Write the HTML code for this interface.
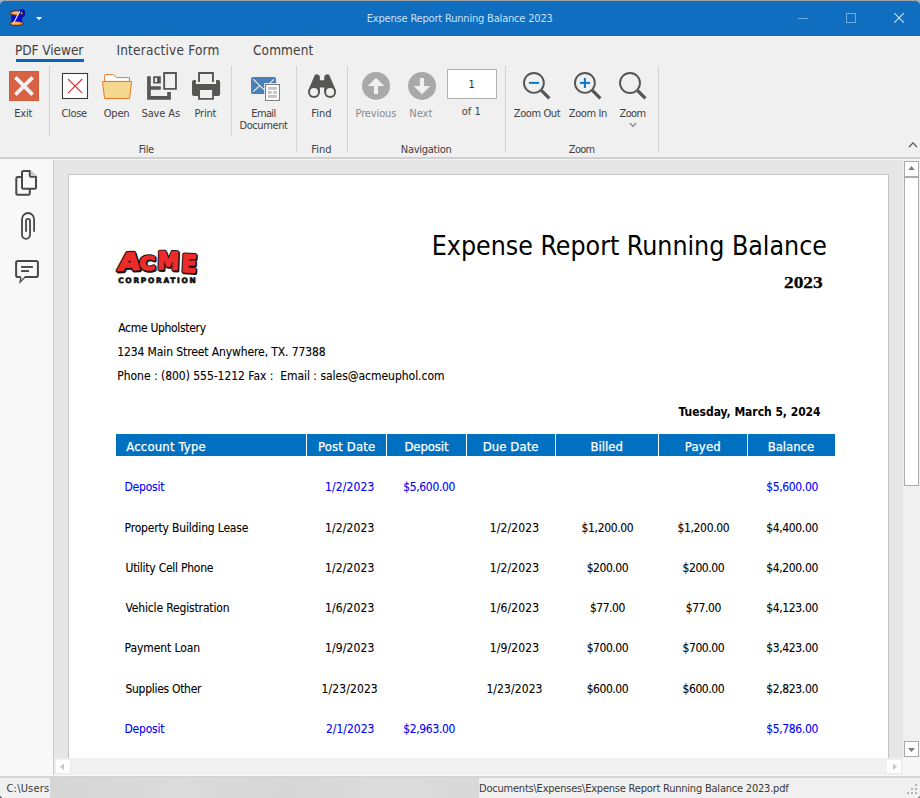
<!DOCTYPE html>
<html lang="en">
<head>
<meta charset="utf-8">
<title>Expense Report Running Balance 2023</title>
<style>
html,body{margin:0;padding:0;}
body{width:920px;height:798px;overflow:hidden;position:relative;background:#f0f0f0;font-family:"DejaVu Sans Condensed","DejaVu Sans","Liberation Sans",sans-serif;font-stretch:condensed;}
.a{position:absolute;}
.t{position:absolute;white-space:pre;line-height:20px;height:20px;}
#corner{left:0;top:0;width:920px;height:12px;background:#9dbbd4;}
#titlebar{left:0;top:0;width:920px;height:36px;background:#0f6ec0;border-radius:5px 5px 0 0;border-top:1px solid #9fa5a8;box-sizing:border-box;}
#tabul{left:16px;top:59px;width:68px;height:3px;background:#0767c0;}
.vs{position:absolute;width:1px;background:#d2d2d2;}
#ribline{left:0;top:157px;width:920px;height:2px;background:#d0d0d0;border-bottom:1px solid #f4f4f4;}
#side{left:0;top:160px;width:53px;height:616px;background:#f8f8f8;}
#sideb{left:53px;top:160px;width:1px;height:616px;background:#c9c9c9;}
#doc{left:54px;top:160px;width:849px;height:598px;background:#e6e6e6;}
#sheet{left:68px;top:174px;width:821px;height:584px;background:#fff;border:1px solid #c4c4c4;border-bottom:none;box-sizing:border-box;}
#vscroll{left:903px;top:160px;width:17px;height:598px;background:#f0f0f0;}
.sbtn{position:absolute;background:#fff;border:1px solid #ababab;box-sizing:border-box;}
#hscroll{left:54px;top:758px;width:866px;height:18px;background:#f0f0f0;}
#statline{left:0;top:776px;width:920px;height:2px;background:#d4d4d4;}
#status{left:0;top:778px;width:920px;height:20px;background:#f0f0f0;}
#redact{left:50px;top:778px;width:429px;height:20px;background:linear-gradient(90deg,#d6d6d6,#dbdbdb 30%,#d7d7d7 55%,#dcdcdc 80%,#d8d8d8);}
#thead{left:116px;top:434px;width:719px;height:22px;background:#0070c0;}
.cs{position:absolute;top:434px;width:1px;height:22px;background:#fff;}
#pagebox{left:447px;top:69px;width:50px;height:30px;background:#fff;border:1px solid #b0b0b0;box-sizing:border-box;}
svg{position:absolute;overflow:visible;}
</style>
</head>
<body>
<div class="a" id="corner"></div>
<div class="a" id="titlebar"></div>
<div class="a" id="tabul"></div>
<div class="vs" style="left:49px;top:66px;height:70px"></div>
<div class="vs" style="left:231px;top:66px;height:70px"></div>
<div class="vs" style="left:296px;top:66px;height:87px"></div>
<div class="vs" style="left:347px;top:66px;height:87px"></div>
<div class="vs" style="left:505px;top:66px;height:87px"></div>
<div class="vs" style="left:658px;top:66px;height:87px"></div>
<div class="a" id="pagebox"></div>
<div class="a" id="ribline"></div>
<div class="a" id="side"></div>
<div class="a" id="sideb"></div>
<div class="a" id="doc"></div>
<div class="a" id="sheet"></div>
<div class="a" id="vscroll"></div>
<div class="sbtn" style="left:904px;top:161px;width:15px;height:16px"></div>
<div class="sbtn" style="left:904px;top:177px;width:15px;height:309px"></div>
<div class="sbtn" style="left:904px;top:741px;width:15px;height:16px"></div>
<div class="a" id="hscroll"></div>
<div class="a" style="left:55px;top:759px;width:16px;height:15px;background:#fff;border:1px solid #ececec;box-sizing:border-box"></div>
<div class="a" style="left:886px;top:759px;width:16px;height:15px;background:#fff;border:1px solid #ececec;box-sizing:border-box"></div>
<div class="a" style="left:903px;top:758px;width:17px;height:17px;background:#f6f6f6"></div>
<div class="a" style="left:0;top:775px;width:920px;height:1px;background:#f8f8f8"></div>
<div class="a" id="statline"></div>
<div class="a" id="status"></div>
<div class="a" id="redact"></div>
<div class="a" style="left:918px;top:796px;width:2px;height:2px;background:linear-gradient(135deg,#f0f0f0 50%,#8a8f94 50%)"></div>
<div class="a" style="left:0;top:796px;width:2px;height:2px;background:linear-gradient(225deg,#f0f0f0 50%,#6a7076 50%)"></div>
<div class="a" id="thead"></div>
<div class="cs" style="left:306px"></div>
<div class="cs" style="left:386px"></div>
<div class="cs" style="left:466px"></div>
<div class="cs" style="left:555px"></div>
<div class="cs" style="left:658px"></div>
<div class="cs" style="left:747px"></div>
<svg width="920" height="798" viewBox="0 0 920 798" style="left:0;top:0">
<!-- app icon: thread spool -->
<g>
<rect x="11.9" y="14" width="9.8" height="9" fill="#0a0ae0" stroke="#00006a" stroke-width="0.8"/>
<ellipse cx="16.5" cy="13.1" rx="6.6" ry="2.3" fill="#f08a3c" stroke="#3a1a08" stroke-width="0.8"/>
<ellipse cx="16.3" cy="12.6" rx="3.5" ry="0.9" fill="#ffc48c"/>
<ellipse cx="16.5" cy="23.4" rx="6.7" ry="2.1" fill="#f08a3c" stroke="#3a1a08" stroke-width="0.8"/>
<ellipse cx="16.3" cy="23.0" rx="4" ry="0.8" fill="#ffc48c"/>
<ellipse cx="21.8" cy="13.2" rx="2.3" ry="3" fill="none" stroke="#00006a" stroke-width="2"/><ellipse cx="21.8" cy="13.2" rx="2.3" ry="3" fill="none" stroke="#1010e0" stroke-width="1.1"/>
<path d="M19.8 10.9 L12.9 24.6" stroke="#e4e4f2" stroke-width="1.2" fill="none"/>
</g>
<path d="M36 17 H42.2 L39.1 20.2 Z" fill="#ffffff"/>
<!-- window controls -->
<path d="M798 18.5 H808" stroke="#74abdd" stroke-width="1" fill="none"/>
<rect x="846.5" y="13.5" width="9" height="9" fill="none" stroke="#74abdd" stroke-width="1"/>
<path d="M894.3 13.1 L903.9 22.7 M903.9 13.1 L894.3 22.7" stroke="#cfe2f4" stroke-width="1.1" fill="none"/>

<!-- Exit -->
<rect x="9" y="71" width="30" height="30" fill="#d86344"/>
<rect x="9.5" y="71.5" width="29" height="29" fill="none" stroke="#d65a38" stroke-width="1"/>
<path d="M15.4 77.4 L32.6 94.6 M32.6 77.4 L15.4 94.6" stroke="#f0f0f0" stroke-width="3.8" fill="none"/>
<!-- Close -->
<rect x="62.5" y="73.5" width="25" height="25" fill="#ffffff" stroke="#3c3c3c" stroke-width="1.1"/>
<path d="M68 79 L82.2 93.2 M82.2 79 L68 93.2" stroke="#e8262c" stroke-width="1.1" fill="none"/>
<!-- Open -->
<path d="M104.6 81.4 V75.6 Q104.6 74.6 105.6 74.6 H112.6 Q113.2 74.6 113.7 75.1 L116.6 77.6 H129.4 V81.4 Z" fill="#ffffff" stroke="#e87a26" stroke-width="1"/>
<path d="M102.4 81.5 H131.6 L129.5 98.5 H104.6 Z" fill="#f5d88f" stroke="#e87a26" stroke-width="1" stroke-linejoin="miter"/>
<!-- Save As -->
<g fill="#565655">
<path d="M147.1 76.3 H150.8 V86.2 H160.8 V89.8 H150.8 V96.1 H167.2 V92.1 H170.9 V99.8 H147.1 Z"/>
<path d="M153.2 76.3 H160.8 V83.6 H153.2 Z M155 78 V82 H157.1 V78 Z" fill-rule="evenodd"/>
<path d="M163.2 72.1 H176.9 V89.8 H163.2 Z M165.1 74 V87.9 H175 V74 Z" fill-rule="evenodd"/>
</g>
<!-- Print -->
<g fill="#565655">
<path d="M198.1 81.9 V72.1 H213.9 V81.9 H212 V74 H200 V81.9 Z"/>
<path d="M194 80.1 H195.9 V84 H216.1 V80.1 H218.1 Q220.1 80.1 220.1 82.1 V93.9 Q220.1 95.9 218.1 95.9 H213.9 V99.8 H198.1 V95.9 H194 Q192 95.9 192 93.9 V82.1 Q192 80.1 194 80.1 Z M200 90.1 V97.9 H212.1 V90.1 Z" fill-rule="evenodd"/>
</g>
<!-- Email Document -->
<rect x="251" y="76.9" width="25.1" height="17.2" rx="2.2" fill="#4a80ba"/>
<path d="M253.3 79.3 L263.6 89.3 L273.9 79.3 M253.3 91.7 L259.6 85.6" stroke="#f4f4f4" stroke-width="1.1" fill="none"/>
<rect x="264.2" y="83.2" width="16.6" height="18.5" fill="#fbfbfb"/>
<rect x="265.5" y="84.5" width="14" height="16" fill="#ffffff" stroke="#7e7e7e" stroke-width="1.1"/>
<g fill="#c2c2c2">
<rect x="268" y="87" width="8.9" height="2.8"/>
<rect x="268" y="91" width="3.8" height="2.8"/>
<rect x="273.1" y="91" width="3.8" height="2.8"/>
<rect x="268" y="95" width="8.9" height="2.8"/>
</g>
<!-- Find binoculars -->
<g fill="#565655">
<path d="M308.4 90 L314.5 75.8 A2.9 2.9 0 0 1 319.9 76.9 V80.3 H324.2 V76.9 A2.9 2.9 0 0 1 329.6 75.8 L335.7 90 L330 96 L324.2 92.1 V87.6 H319.9 V92.1 L314 96 Z"/>
<circle cx="314" cy="92.1" r="6"/>
<circle cx="330.1" cy="92.1" r="6"/>
</g>
<circle cx="314" cy="92.1" r="4" fill="#f0f0f0"/>
<circle cx="330.1" cy="92.1" r="4" fill="#f0f0f0"/>
<!-- Previous / Next -->
<circle cx="376.05" cy="85.95" r="14" fill="#a9a9a9"/>
<path d="M376 77.7 L384.3 86.1 H378.05 V94.1 H373.9 V86.1 H367.7 Z" fill="#f0f0f0"/>
<circle cx="422.05" cy="85.95" r="14" fill="#a9a9a9"/>
<path d="M422 94.3 L430.3 85.9 H424.05 V77.9 H419.9 V85.9 H413.7 Z" fill="#f0f0f0"/>
<!-- Zoom icons -->
<g fill="none" stroke="#555555">
<circle cx="533.9" cy="82.9" r="9.95" stroke-width="1.9"/>
<path d="M541.4 90.4 L549.3 98.3" stroke-width="3.2"/>
<circle cx="584.9" cy="82.9" r="9.95" stroke-width="1.9"/>
<path d="M592.4 90.4 L600.3 98.3" stroke-width="3.2"/>
<circle cx="630" cy="83" r="10" stroke-width="1.9"/>
<path d="M637.5 90.5 L645.4 98.4" stroke-width="3.2"/>
</g>
<rect x="528.9" y="81.9" width="10.15" height="2" fill="#0b79c8"/>
<rect x="579.9" y="81.9" width="10.15" height="2" fill="#0b79c8"/>
<rect x="583.9" y="77.9" width="2" height="10.05" fill="#0b79c8"/>
<path d="M629.9 123.2 L633 126.3 L636.1 123.2" fill="none" stroke="#7a7a7a" stroke-width="1.2"/>
<!-- ribbon collapse chevron -->
<path d="M909 147 L913 142.9 L917 147" fill="none" stroke="#5a5a5a" stroke-width="1.3"/>

<!-- sidebar icons -->
<g fill="none" stroke="#484848" stroke-width="2" stroke-linejoin="round">
<path d="M29.8 171 H23.5 Q22 171 22 172.5 V187.3 Q22 188.8 23.5 188.8 H34.5 Q36 188.8 36 187.3 V176.8 H31.3 Q29.8 176.8 29.8 175.3 Z"/>
<path d="M22 177 H17.8 Q16.3 177 16.3 178.5 V193.2 Q16.3 194.7 17.8 194.7 H28.3 Q29.8 194.7 29.8 193.2 V188.8"/>
</g>
<path d="M30.8 170 L37 176 H30.8 Z" fill="#c8c8c8"/>
<path d="M34.1 231.8 V219.05 A6.05 6.05 0 0 0 22 219.05 V234.8 A4.02 4.02 0 0 0 30.05 234.8 V220.8 A2 2 0 0 0 26.05 220.8 V231.8" fill="none" stroke="#484848" stroke-width="1.8"/>
<g>
<path d="M24.6 277 H36.1 Q37.9 277 37.9 275.2 V262.7 Q37.9 260.9 36.1 260.9 H17.9 Q16.1 260.9 16.1 262.7 V275.2 Q16.1 277 17.9 277 H20.4" fill="none" stroke="#484848" stroke-width="2" stroke-linejoin="miter"/>
<path d="M20.3 276.2 L21.6 277.6 L21.2 280.4 L23.6 277.8 L25.6 276.2 L25.6 277.6 L19.2 284 Z" fill="#484848"/>
<rect x="21.1" y="266" width="11.8" height="1.9" fill="#484848"/>
<rect x="21.1" y="270.1" width="7.9" height="1.9" fill="#484848"/>
</g>

<!-- scrollbar arrows -->
<path d="M908.3 170 L911.5 166 L914.8 170 Z" fill="#7d7d7d"/>
<path d="M908 748 H915 L911.5 752 Z" fill="#7d7d7d"/>
<path d="M64 763.4 V770 L59.9 766.7 Z" fill="#c6c6c6"/>
<path d="M893 763.4 V770 L897.1 766.7 Z" fill="#c6c6c6"/>
<!-- resize grip -->
<g fill="#b4b4b4">
<rect x="915" y="784" width="2" height="2"/>
<rect x="911" y="788" width="2" height="2"/><rect x="915" y="788" width="2" height="2"/>
<rect x="907" y="792" width="2" height="2"/><rect x="911" y="792" width="2" height="2"/><rect x="915" y="792" width="2" height="2"/>
</g>
<!-- ACME logo -->
<g font-family='"DejaVu Sans","Liberation Sans",sans-serif' font-weight="700" font-stretch="normal" style="font-stretch:normal" stroke-linejoin="round">
 <g fill="#111111" stroke="#111111" stroke-width="3.4" transform="translate(1.1,1.2)">
  <text transform="translate(117.4,270.5) rotate(-3) skewX(-10)" font-size="23.5" textLength="21.5" lengthAdjust="spacingAndGlyphs">A</text>
  <text transform="translate(139.5,270.2)" font-size="19.8" textLength="15.6" lengthAdjust="spacingAndGlyphs">C</text>
  <text transform="translate(157.0,268.9) rotate(2)" font-size="24.2" textLength="21.8" lengthAdjust="spacingAndGlyphs">M</text>
  <text transform="translate(180.9,271.4) rotate(3)" font-size="23.8" textLength="15.2" lengthAdjust="spacingAndGlyphs">E</text>
 </g>
 <g fill="#111111" stroke="#111111" stroke-width="3.6">
  <text transform="translate(117.4,270.5) rotate(-3) skewX(-10)" font-size="23.5" textLength="21.5" lengthAdjust="spacingAndGlyphs">A</text>
  <text transform="translate(139.5,270.2)" font-size="19.8" textLength="15.6" lengthAdjust="spacingAndGlyphs">C</text>
  <text transform="translate(157.0,268.9) rotate(2)" font-size="24.2" textLength="21.8" lengthAdjust="spacingAndGlyphs">M</text>
  <text transform="translate(180.9,271.4) rotate(3)" font-size="23.8" textLength="15.2" lengthAdjust="spacingAndGlyphs">E</text>
 </g>
 <g fill="#ee2b2b" stroke="#ee2b2b" stroke-width="1.7">
  <text transform="translate(117.4,270.5) rotate(-3) skewX(-10)" font-size="23.5" textLength="21.5" lengthAdjust="spacingAndGlyphs">A</text>
  <text transform="translate(139.5,270.2)" font-size="19.8" textLength="15.6" lengthAdjust="spacingAndGlyphs">C</text>
  <text transform="translate(157.0,268.9) rotate(2)" font-size="24.2" textLength="21.8" lengthAdjust="spacingAndGlyphs">M</text>
  <text transform="translate(180.9,271.4) rotate(3)" font-size="23.8" textLength="15.2" lengthAdjust="spacingAndGlyphs">E</text>
 </g>
 <text x="118.2" y="282.7" font-size="7.4" fill="#111111" stroke="#111111" stroke-width="0.7" textLength="77.6" lengthAdjust="spacing">CORPORATION</text>
</g>

</svg>

<div class="t" style='left:366.75px;top:8.89px;font-size:11px;letter-spacing:-0.189px;color:#cbe0f4;'>Expense Report Running Balance 2023</div>
<div class="t" style='left:15.00px;top:40.03px;font-size:13.5px;letter-spacing:-0.054px;color:#404040;'>PDF Viewer</div>
<div class="t" style='left:116.40px;top:40.03px;font-size:13.5px;letter-spacing:0.216px;color:#404040;'>Interactive Form</div>
<div class="t" style='left:253.00px;top:40.03px;font-size:13.5px;letter-spacing:0.125px;color:#404040;'>Comment</div>
<div class="t" style='left:14.25px;top:103.64px;font-size:11px;letter-spacing:-0.202px;color:#404040;'>Exit</div>
<div class="t" style='left:61.50px;top:103.64px;font-size:11px;letter-spacing:-0.343px;color:#404040;'>Close</div>
<div class="t" style='left:103.75px;top:103.64px;font-size:11px;letter-spacing:-0.221px;color:#404040;'>Open</div>
<div class="t" style='left:141.50px;top:103.64px;font-size:11px;letter-spacing:-0.117px;color:#404040;'>Save As</div>
<div class="t" style='left:194.50px;top:103.64px;font-size:11px;letter-spacing:-0.216px;color:#404040;'>Print</div>
<div class="t" style='left:251.25px;top:103.64px;font-size:11px;letter-spacing:-0.614px;color:#404040;'>Email</div>
<div class="t" style='left:239.50px;top:116.39px;font-size:11px;letter-spacing:-0.414px;color:#404040;'>Document</div>
<div class="t" style='left:311.25px;top:103.64px;font-size:11px;letter-spacing:0.028px;color:#404040;'>Find</div>
<div class="t" style='left:355.50px;top:103.64px;font-size:11px;letter-spacing:-0.124px;color:#8a8a8a;'>Previous</div>
<div class="t" style='left:409.25px;top:103.64px;font-size:11px;letter-spacing:0.032px;color:#8a8a8a;'>Next</div>
<div class="t" style='left:468.50px;top:74.89px;font-size:11px;letter-spacing:0.000px;color:#303030;'>1</div>
<div class="t" style='left:461.75px;top:101.64px;font-size:11px;letter-spacing:0.025px;color:#404040;'>of 1</div>
<div class="t" style='left:513.75px;top:103.64px;font-size:11px;letter-spacing:-0.390px;color:#404040;'>Zoom Out</div>
<div class="t" style='left:568.75px;top:103.64px;font-size:11px;letter-spacing:-0.389px;color:#404040;'>Zoom In</div>
<div class="t" style='left:619.50px;top:103.64px;font-size:11px;letter-spacing:-0.628px;color:#404040;'>Zoom</div>
<div class="t" style='left:138.75px;top:139.64px;font-size:11px;letter-spacing:-0.381px;color:#404040;'>File</div>
<div class="t" style='left:311.25px;top:139.64px;font-size:11px;letter-spacing:0.028px;color:#404040;'>Find</div>
<div class="t" style='left:400.75px;top:139.64px;font-size:11px;letter-spacing:-0.261px;color:#404040;'>Navigation</div>
<div class="t" style='left:568.80px;top:139.64px;font-size:11px;letter-spacing:-0.695px;color:#404040;'>Zoom</div>
<div class="t" style='left:6.50px;top:779.39px;font-size:11px;letter-spacing:0.194px;color:#383838;'>C:\Users</div>
<div class="t" style='left:479.00px;top:779.39px;font-size:11px;letter-spacing:-0.215px;color:#383838;'>Documents\Expenses\Expense Report Running Balance 2023.pdf</div>
<div class="t" style='left:431.75px;top:235.78px;font-size:26.5px;letter-spacing:-0.011px;color:#000000;'>Expense Report Running Balance</div>
<div class="t" style='left:783.90px;top:272.23px;font-size:17.7px;letter-spacing:0.000px;color:#000000;transform:scaleX(1.0948);transform-origin:0 0;-webkit-text-stroke:0.25px #000000;font-weight:700;font-family:"Liberation Serif", serif;'>2023</div>
<div class="t" style='left:118.25px;top:318.05px;font-size:12px;letter-spacing:-0.310px;color:#000000;-webkit-text-stroke:0.1px #000000;'>Acme Upholstery</div>
<div class="t" style='left:117.25px;top:342.30px;font-size:12px;letter-spacing:-0.106px;color:#000000;-webkit-text-stroke:0.1px #000000;'>1234 Main Street Anywhere, TX. 77388</div>
<div class="t" style='left:117.25px;top:366.30px;font-size:12px;letter-spacing:-0.030px;color:#000000;-webkit-text-stroke:0.1px #000000;'>Phone : (800) 555-1212 Fax : &nbsp;Email : sales@acmeuphol.com</div>
<div class="t" style='left:678.60px;top:401.75px;font-size:12px;letter-spacing:-0.033px;color:#000000;font-weight:700;'>Tuesday, March 5, 2024</div>
<div class="t" style='left:126.25px;top:437.00px;font-size:13px;letter-spacing:0.171px;color:#ffffff;-webkit-text-stroke:0.25px #ffffff;'>Account Type</div>
<div class="t" style='left:318.00px;top:437.00px;font-size:13px;letter-spacing:0.139px;color:#ffffff;-webkit-text-stroke:0.25px #ffffff;'>Post Date</div>
<div class="t" style='left:404.40px;top:437.00px;font-size:13px;letter-spacing:-0.088px;color:#ffffff;-webkit-text-stroke:0.25px #ffffff;'>Deposit</div>
<div class="t" style='left:482.70px;top:437.00px;font-size:13px;letter-spacing:0.073px;color:#ffffff;-webkit-text-stroke:0.25px #ffffff;'>Due Date</div>
<div class="t" style='left:590.50px;top:437.00px;font-size:13px;letter-spacing:0.006px;color:#ffffff;-webkit-text-stroke:0.25px #ffffff;'>Billed</div>
<div class="t" style='left:684.80px;top:437.00px;font-size:13px;letter-spacing:0.187px;color:#ffffff;-webkit-text-stroke:0.25px #ffffff;'>Payed</div>
<div class="t" style='left:767.80px;top:437.00px;font-size:13px;letter-spacing:-0.058px;color:#ffffff;-webkit-text-stroke:0.25px #ffffff;'>Balance</div>
<div class="t" style='left:124.50px;top:477.30px;font-size:12px;letter-spacing:-0.215px;color:#0000ff;-webkit-text-stroke:0.1px #0000ff;'>Deposit</div>
<div class="t" style='left:324.90px;top:477.30px;font-size:12px;letter-spacing:0.155px;color:#0000ff;-webkit-text-stroke:0.1px #0000ff;'>1/2/2023</div>
<div class="t" style='left:403.19px;top:477.30px;font-size:12px;letter-spacing:-0.341px;color:#0000ff;-webkit-text-stroke:0.1px #0000ff;'>$5,600.00</div>
<div class="t" style='left:766.13px;top:477.30px;font-size:12px;letter-spacing:-0.341px;color:#0000ff;-webkit-text-stroke:0.1px #0000ff;'>$5,600.00</div>
<div class="t" style='left:124.50px;top:518.30px;font-size:12px;letter-spacing:-0.169px;color:#000000;-webkit-text-stroke:0.1px #000000;'>Property Building Lease</div>
<div class="t" style='left:324.90px;top:518.30px;font-size:12px;letter-spacing:0.155px;color:#000000;-webkit-text-stroke:0.1px #000000;'>1/2/2023</div>
<div class="t" style='left:489.65px;top:518.30px;font-size:12px;letter-spacing:0.155px;color:#000000;-webkit-text-stroke:0.1px #000000;'>1/2/2023</div>
<div class="t" style='left:581.54px;top:518.30px;font-size:12px;letter-spacing:-0.341px;color:#000000;-webkit-text-stroke:0.1px #000000;'>$1,200.00</div>
<div class="t" style='left:677.44px;top:518.30px;font-size:12px;letter-spacing:-0.341px;color:#000000;-webkit-text-stroke:0.1px #000000;'>$1,200.00</div>
<div class="t" style='left:766.13px;top:518.30px;font-size:12px;letter-spacing:-0.341px;color:#000000;-webkit-text-stroke:0.1px #000000;'>$4,400.00</div>
<div class="t" style='left:125.50px;top:558.30px;font-size:12px;letter-spacing:-0.256px;color:#000000;-webkit-text-stroke:0.1px #000000;'>Utility Cell Phone</div>
<div class="t" style='left:324.90px;top:558.30px;font-size:12px;letter-spacing:0.155px;color:#000000;-webkit-text-stroke:0.1px #000000;'>1/2/2023</div>
<div class="t" style='left:489.65px;top:558.30px;font-size:12px;letter-spacing:0.155px;color:#000000;-webkit-text-stroke:0.1px #000000;'>1/2/2023</div>
<div class="t" style='left:586.63px;top:558.30px;font-size:12px;letter-spacing:-0.437px;color:#000000;-webkit-text-stroke:0.1px #000000;'>$200.00</div>
<div class="t" style='left:682.53px;top:558.30px;font-size:12px;letter-spacing:-0.437px;color:#000000;-webkit-text-stroke:0.1px #000000;'>$200.00</div>
<div class="t" style='left:766.13px;top:558.30px;font-size:12px;letter-spacing:-0.341px;color:#000000;-webkit-text-stroke:0.1px #000000;'>$4,200.00</div>
<div class="t" style='left:125.50px;top:598.30px;font-size:12px;letter-spacing:-0.153px;color:#000000;-webkit-text-stroke:0.1px #000000;'>Vehicle Registration</div>
<div class="t" style='left:324.90px;top:598.30px;font-size:12px;letter-spacing:0.155px;color:#000000;-webkit-text-stroke:0.1px #000000;'>1/6/2023</div>
<div class="t" style='left:489.65px;top:598.30px;font-size:12px;letter-spacing:0.155px;color:#000000;-webkit-text-stroke:0.1px #000000;'>1/6/2023</div>
<div class="t" style='left:589.91px;top:598.30px;font-size:12px;letter-spacing:-0.461px;color:#000000;-webkit-text-stroke:0.1px #000000;'>$77.00</div>
<div class="t" style='left:685.81px;top:598.30px;font-size:12px;letter-spacing:-0.461px;color:#000000;-webkit-text-stroke:0.1px #000000;'>$77.00</div>
<div class="t" style='left:766.13px;top:598.30px;font-size:12px;letter-spacing:-0.341px;color:#000000;-webkit-text-stroke:0.1px #000000;'>$4,123.00</div>
<div class="t" style='left:124.50px;top:637.85px;font-size:12px;letter-spacing:-0.082px;color:#000000;-webkit-text-stroke:0.1px #000000;'>Payment Loan</div>
<div class="t" style='left:324.90px;top:637.85px;font-size:12px;letter-spacing:0.155px;color:#000000;-webkit-text-stroke:0.1px #000000;'>1/9/2023</div>
<div class="t" style='left:489.65px;top:637.85px;font-size:12px;letter-spacing:0.155px;color:#000000;-webkit-text-stroke:0.1px #000000;'>1/9/2023</div>
<div class="t" style='left:586.63px;top:637.85px;font-size:12px;letter-spacing:-0.437px;color:#000000;-webkit-text-stroke:0.1px #000000;'>$700.00</div>
<div class="t" style='left:682.53px;top:637.85px;font-size:12px;letter-spacing:-0.437px;color:#000000;-webkit-text-stroke:0.1px #000000;'>$700.00</div>
<div class="t" style='left:766.13px;top:637.85px;font-size:12px;letter-spacing:-0.341px;color:#000000;-webkit-text-stroke:0.1px #000000;'>$3,423.00</div>
<div class="t" style='left:125.50px;top:679.30px;font-size:12px;letter-spacing:-0.294px;color:#000000;-webkit-text-stroke:0.1px #000000;'>Supplies Other</div>
<div class="t" style='left:321.62px;top:679.30px;font-size:12px;letter-spacing:0.096px;color:#000000;-webkit-text-stroke:0.1px #000000;'>1/23/2023</div>
<div class="t" style='left:486.38px;top:679.30px;font-size:12px;letter-spacing:0.096px;color:#000000;-webkit-text-stroke:0.1px #000000;'>1/23/2023</div>
<div class="t" style='left:586.63px;top:679.30px;font-size:12px;letter-spacing:-0.437px;color:#000000;-webkit-text-stroke:0.1px #000000;'>$600.00</div>
<div class="t" style='left:682.53px;top:679.30px;font-size:12px;letter-spacing:-0.437px;color:#000000;-webkit-text-stroke:0.1px #000000;'>$600.00</div>
<div class="t" style='left:766.13px;top:679.30px;font-size:12px;letter-spacing:-0.341px;color:#000000;-webkit-text-stroke:0.1px #000000;'>$2,823.00</div>
<div class="t" style='left:124.50px;top:719.30px;font-size:12px;letter-spacing:-0.215px;color:#0000ff;-webkit-text-stroke:0.1px #0000ff;'>Deposit</div>
<div class="t" style='left:325.90px;top:719.30px;font-size:12px;letter-spacing:0.012px;color:#0000ff;-webkit-text-stroke:0.1px #0000ff;'>2/1/2023</div>
<div class="t" style='left:403.19px;top:719.30px;font-size:12px;letter-spacing:-0.341px;color:#0000ff;-webkit-text-stroke:0.1px #0000ff;'>$2,963.00</div>
<div class="t" style='left:766.13px;top:719.30px;font-size:12px;letter-spacing:-0.341px;color:#0000ff;-webkit-text-stroke:0.1px #0000ff;'>$5,786.00</div>
</body>
</html>
